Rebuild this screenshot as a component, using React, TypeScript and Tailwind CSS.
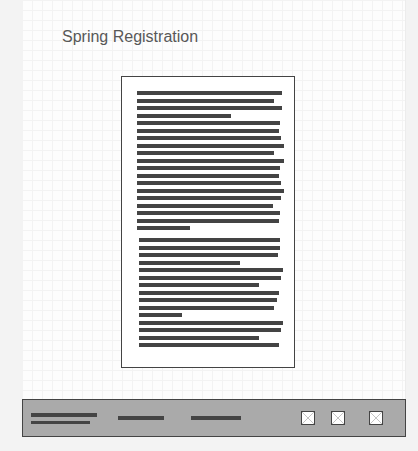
import React from 'react';

const introLines = [145, 137, 145, 94, 143, 142, 144, 147, 137, 147, 143, 142, 144, 147, 144, 136, 143, 142, 53];
const detailLines = [141, 141, 139, 101, 144, 142, 120, 140, 138, 135, 43, 144, 142, 120, 140];

function TextBlock({ widths, className }: { widths: number[]; className?: string }) {
    return (
        <div className={`flex flex-col gap-[3.5px] ${className ?? ''}`}>
            {widths.map((w, i) => (
                <div key={i} className="h-[4px] bg-[#444444]" style={{ width: w }} />
            ))}
        </div>
    );
}

function ImageBox() {
    return (
        <div className="w-[14px] h-[14px] border border-[#444444] bg-white flex-shrink-0">
            <svg width="12" height="12" viewBox="0 0 12 12" className="block">
                <line x1="0" y1="0" x2="12" y2="12" stroke="#c4c4c4" strokeWidth="1" />
                <line x1="12" y1="0" x2="0" y2="12" stroke="#c4c4c4" strokeWidth="1" />
            </svg>
        </div>
    );
}

export default function App() {
    return (
        <div className="w-full h-[451px] bg-[#f3f3f3] overflow-hidden" style={{ fontFamily: '"Liberation Sans", Arial, sans-serif' }}>
            <div className="ml-[22px] w-[384px] h-[437px] flex flex-col bg-[#fdfdfd] bg-[linear-gradient(to_right,#f3f3f3_1px,transparent_1px),linear-gradient(to_bottom,#f3f3f3_1px,transparent_1px)] bg-[size:10px_10px] border-r border-[#ececec]">
                {/* Title */}
                <h1 className="mt-[28px] ml-[40px] text-[16px] leading-[18px] text-[#585858]">Spring Registration</h1>

                {/* Document */}
                <div className="mt-[30px] ml-[99px] w-[174px] h-[292px] border border-[#444444] bg-white pt-[14px] pl-[15px]">
                    <TextBlock widths={introLines} />
                    <TextBlock widths={detailLines} className="mt-[8px] ml-[2px]" />
                </div>

                {/* Footer bar */}
                <div className="mt-auto h-[38px] w-[384px] border border-[#444444] bg-[#aaaaaa] flex items-center pl-[8px]">
                    <div className="flex flex-col gap-[4px] pt-[1px]">
                        <div className="w-[66px] h-[4px] bg-[#444444]" />
                        <div className="w-[59px] h-[3px] bg-[#444444]" />
                    </div>
                    <div className="ml-[21px] w-[46px] h-[4px] bg-[#444444] -mt-[1px]" />
                    <div className="ml-[27px] w-[50px] h-[4px] bg-[#444444] -mt-[1px]" />
                    <div className="ml-[60px]">
                        <ImageBox />
                    </div>
                    <div className="ml-[16px]">
                        <ImageBox />
                    </div>
                    <div className="ml-[24px]">
                        <ImageBox />
                    </div>
                </div>
            </div>
        </div>
    );
}
